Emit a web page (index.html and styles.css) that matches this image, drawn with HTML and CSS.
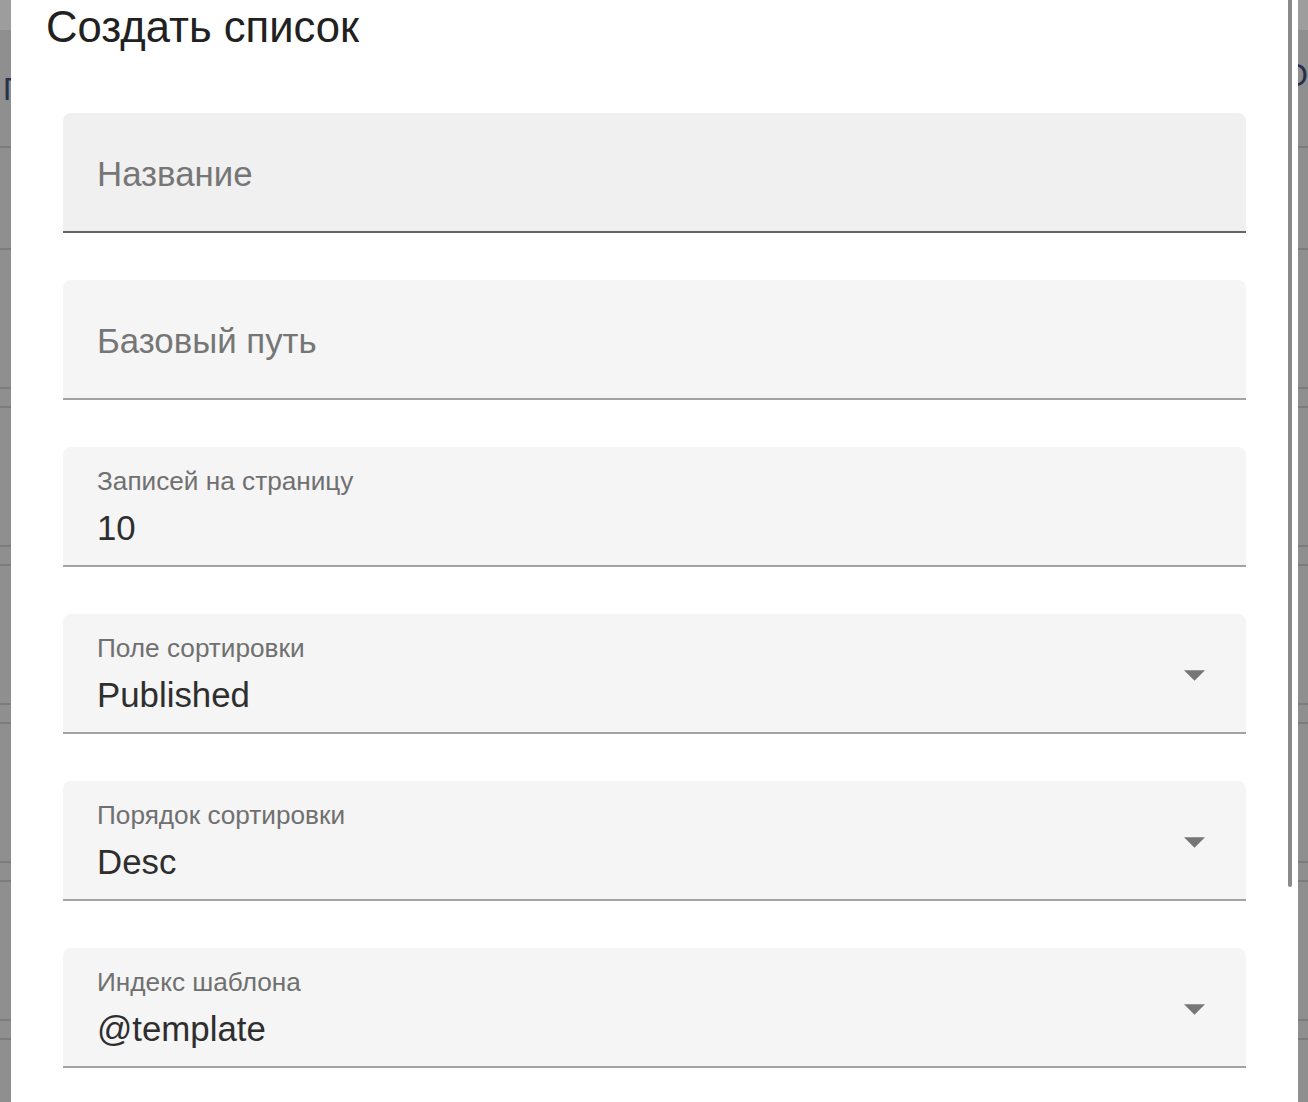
FILE: index.html
```html
<!DOCTYPE html>
<html lang="ru">
<head>
<meta charset="utf-8">
<title>Создать список</title>
<link rel="stylesheet" href="styles.css">
</head>
<body>
<div class="page">
  <div class="appbar"></div>
  <div class="toolbar">
    <span class="tool-left">П</span>
    <span class="tool-right">О</span>
  </div>
  <div class="row row-head"></div>
  <div class="row row-tall"></div>
  <div class="row row-thin"></div>
  <div class="row row-tall"></div>
  <div class="row row-thin"></div>
  <div class="row row-tall"></div>
  <div class="row row-thin"></div>
  <div class="row row-tall"></div>
  <div class="row row-thin"></div>
  <div class="row row-tall"></div>
  <div class="row row-thin"></div>
</div>

<div class="dialog">
  <h2 class="dialog-title">Создать список</h2>
  <div class="form">
    <div class="field field-hover">
      <div class="field-body field-empty">
        <span class="placeholder">Название</span>
      </div>
    </div>
    <div class="field">
      <div class="field-body field-empty">
        <span class="placeholder">Базовый путь</span>
      </div>
    </div>
    <div class="field">
      <div class="field-body">
        <span class="label">Записей на страницу</span>
        <span class="value">10</span>
      </div>
    </div>
    <div class="field">
      <div class="field-body">
        <span class="label">Поле сортировки</span>
        <span class="value">Published</span>
      </div>
      <svg class="arrow" viewBox="0 0 20 10" width="21" height="11"><path d="M0 0 L10 10 L20 0z"/></svg>
    </div>
    <div class="field">
      <div class="field-body">
        <span class="label">Порядок сортировки</span>
        <span class="value">Desc</span>
      </div>
      <svg class="arrow" viewBox="0 0 20 10" width="21" height="11"><path d="M0 0 L10 10 L20 0z"/></svg>
    </div>
    <div class="field">
      <div class="field-body">
        <span class="label">Индекс шаблона</span>
        <span class="value">@template</span>
      </div>
      <svg class="arrow" viewBox="0 0 20 10" width="21" height="11"><path d="M0 0 L10 10 L20 0z"/></svg>
    </div>
  </div>
  <div class="scroll-thumb"></div>
</div>
</body>
</html>
```

FILE: styles.css
```css
* { box-sizing: border-box; }

html, body {
  margin: 0;
  padding: 0;
  height: 100%;
  overflow: hidden;
}

body {
  font-family: "Liberation Sans", Arial, sans-serif;
  background: #8f8f8f;
}

.page {
  display: flex;
  flex-direction: column;
  height: 100%;
  background: #8f8f8f;
}

.appbar {
  height: 30px;
  background: #9d9d9d;
}

.toolbar {
  height: 118px;
  display: flex;
  justify-content: space-between;
  align-items: flex-start;
  border-bottom: 2px solid #7c7c7c;
  font-size: 32px;
  color: #27314a;
  line-height: 1;
}

.tool-left {
  margin-top: 43px;
  margin-left: 3px;
}

.tool-right {
  margin-top: 29px;
  margin-right: 0;
}

.row {
  border-bottom: 2px solid #7c7c7c;
}

.row-head { height: 102px; }
.row-tall { height: 139px; }
.row-thin { height: 19px; }

/* dialog */
.dialog {
  position: fixed;
  left: 11px;
  top: 0;
  width: 1287px;
  bottom: 0;
  background: #ffffff;
  overflow: hidden;
}

.dialog-title {
  margin: 0;
  padding: 6px 0 0 35px;
  font-size: 43.6px;
  line-height: 43px;
  font-weight: 400;
  color: #212121;
}

.form {
  display: flex;
  flex-direction: column;
  gap: 48px;
  margin-top: 64px;
  padding: 0 52px;
}

.field {
  display: flex;
  height: 120px;
  background: #f5f5f5;
  border-radius: 8px 8px 0 0;
  border-bottom: 2px solid #a3a3a3;
}

.form .field + .field {
  margin-top: -1px;
}

.field-hover {
  background: #f0f0f0;
  border-bottom-color: #646464;
}

.field-body {
  flex: 1;
  display: flex;
  flex-direction: column;
  padding: 19px 0 0 34px;
}

.field-empty {
  padding-top: 41px;
}

.placeholder {
  font-size: 34.8px;
  line-height: 40px;
  color: #767676;
}

.label {
  font-size: 26.2px;
  line-height: 30px;
  color: #707070;
}

.value {
  margin-top: 12px;
  font-size: 34.8px;
  line-height: 40px;
  color: #2e2e2e;
}

.arrow {
  margin: 56px 41px 0 0;
  fill: #767676;
  flex: none;
}

.scroll-thumb {
  position: absolute;
  right: 6px;
  top: 0;
  width: 4px;
  height: 887px;
  background: #8a8a8a;
  border-radius: 0 0 2px 2px;
}
```
